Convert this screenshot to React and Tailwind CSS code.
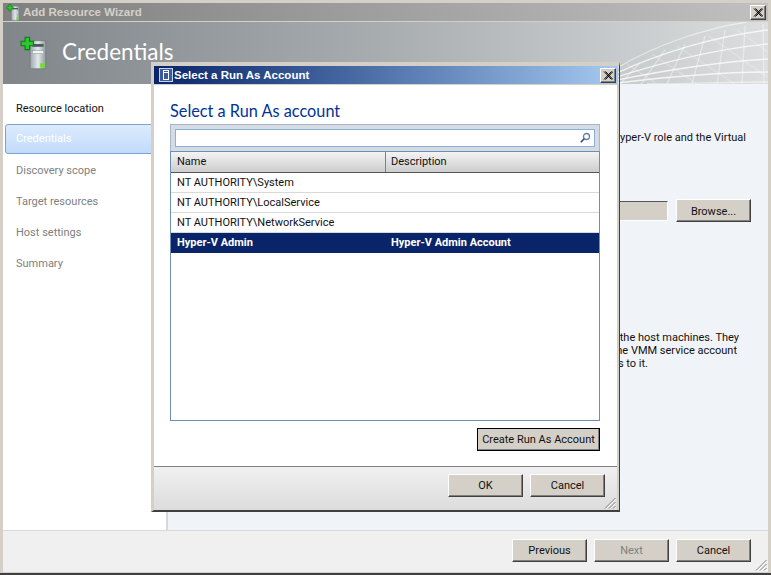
const ServerIcon = ({ className }) => (
    <svg viewBox="0 0 24 30" className={className}>
        <defs>
            <linearGradient id="srv" x1="0" x2="1" y1="0" y2="0">
                <stop offset="0" stopColor="#9aa6ac" />
                <stop offset="0.5" stopColor="#e4e9ea" />
                <stop offset="1" stopColor="#8c979d" />
            </linearGradient>
        </defs>
        <rect x="9" y="4" width="14" height="25" rx="1" fill="url(#srv)" stroke="#6b767c" strokeWidth="0.6" />
        <rect x="11" y="7" width="10" height="2.5" fill="#4f5a60" />
        <rect x="11" y="13" width="10" height="2.5" fill="#f4f6f6" stroke="#7d888e" strokeWidth="0.4" />
        <rect x="18" y="24" width="4" height="4" fill="#6fe02a" />
        <path d="M4.5 1h4v3.5H12v4H8.5V12h-4V8.500H1v-4h3.500z" fill="#27c92d" stroke="#0f7a18" strokeWidth="1" />
    </svg>
);

const CloseButton = ({ className }) => (
    <button className={`flex h-[15px] w-[16px] items-center justify-center border-t border-l border-t-white border-l-white border-r border-b border-r-[#404040] border-b-[#404040] bg-[#d4d0c8] shadow-[inset_-1px_-1px_0_#808080] ${className}`}>
        <svg viewBox="0 0 10 9" className="h-[9px] w-[10px]">
            <path d="M1 0.500L8.500 8.500M2.500 0.500L10 8.500M8.500 0.500L1 8.500M10 0.500L2.500 8.500" stroke="#000" strokeWidth="1" fill="none" />
        </svg>
    </button>
);

const Grip = ({ className }) => (
    <svg viewBox="0 0 12 12" className={`h-3 w-3 ${className}`}>
        <path d="M11.500 1L1 11.500M11.500 5L5 11.500M11.500 9L9 11.500" stroke="#808080" strokeWidth="1" fill="none" />
        <path d="M11.500 2.500L2.500 11.500M11.500 6.500L6.500 11.500M11.500 10.500L10.500 11.500" stroke="#fff" strokeWidth="1" fill="none" />
    </svg>
);

const Button = ({ children, disabled, className = '' }) => (
    <button className={`flex h-[23px] w-[75px] items-center justify-center whitespace-nowrap border-t border-l border-t-white border-l-white border-r border-b border-r-[#404040] border-b-[#404040] bg-[#d4d0c8] pt-[2px] shadow-[inset_-1px_-1px_0_#808080] text-[11px] ${disabled ? 'text-[#808080]' : 'text-[#111]'} ${className}`}>
        {children}
    </button>
);

const Mesh = () => (
    <svg viewBox="0 0 151 62" className="h-[62px] w-[151px] shrink-0" fill="none">
        <g stroke="#fff" strokeOpacity="0.75" strokeWidth="1.300">
            <path d="M0 46C40 22 90 6 130 0" strokeOpacity="0.5" />
            <path d="M0 51C45 30 100 14 151 8" />
            <path d="M0 55C50 39 100 27 151 22" />
            <path d="M0 58C50 48 100 40 151 37" />
            <path d="M0 61C50 55 100 50 151 50" />
            <path d="M30 62C60 62 110 60 151 60" strokeOpacity="0.5" />
        </g>
        <g stroke="#fff" strokeOpacity="0.4" strokeWidth="1.300">
            <path d="M3 62L22 42M24 62L48 28M50 62L68 22M75 62L88 14M100 62L108 8M125 62L128 4M147 62L146 2" />
            <path d="M10 42L40 62M35 32L80 62M60 24L118 62M92 14L150 55M120 8L151 30" strokeOpacity="0.25" />
        </g>
    </svg>
);

const StepItem = ({ label, active, disabled }) => {
    if (active) {
        return (
            <div className="-mr-1 mb-px flex h-[30px] items-center rounded-[3px] border border-[#7da2ce] bg-gradient-to-b from-[#dcebfc] to-[#c1dbfc] pl-[10px] text-white">
                {label}
            </div>
        );
    }
    return (
        <div className={`flex h-[31px] items-center pl-[11px] pt-px ${disabled ? 'text-[#808080]' : 'text-[#111]'}`}>
            {label}
        </div>
    );
};

const AccountRow = ({ name, description, selected }) => (
    <div className={`flex h-5 items-center pt-px ${selected ? 'bg-[#0a246a] font-bold text-white' : 'border-b border-[#d9d9d9] text-[#111]'}`}>
        <div className="w-[215px] pl-[6px]">{name}</div>
        <div className="pl-[5px]">{description}</div>
    </div>
);

const SelectDialog = () => (
    <div className="absolute left-[151px] top-[62px] flex h-[450px] w-[469px] flex-col border-r border-b-2 border-r-[#404040] border-b-[#404040] border-t-[4px] border-l-[3px] border-t-[#d4d0c8] border-l-[#d4d0c8]">
        <div className="mr-[1px] flex h-[18px] shrink-0 items-center bg-gradient-to-r from-[#0a246a] to-[#a6caf0] pl-[5px] pr-[2px]">
            <div className="flex h-[14px] w-[14px] items-center justify-center border border-[#c9d3ea] bg-[#3d5a9e]">
                <div className="flex h-[10px] w-[6px] flex-col gap-[1px] border border-white">
                    <div className="h-[2px] border-b border-white" />
                </div>
            </div>
            <span className="ml-[1px] mt-px font-['Liberation_Sans'] text-[11.500px] font-bold text-white">Select a Run As Account</span>
            <CloseButton className="ml-auto" />
        </div>
        <div className="flex flex-1 flex-col border-t border-t-[#d4d0c8] border-r-2 border-r-[#d4d0c8]">
            <div className="flex flex-1 flex-col bg-white pl-[16px] pr-[17px] pt-[14px]">
                <h1 className="h-[25px] font-['Lato'] text-[16.300px] leading-[24px] text-[#003399]">Select a Run As account</h1>
                <div className="flex h-[27px] items-center border border-b-0 border-[#a8b8cc] bg-[#d5dbe2] px-[4px]">
                    <div className="flex h-[18px] flex-1 items-center justify-end border border-[#8eb0d4] bg-white pr-[3px]">
                        <svg viewBox="0 0 12 12" className="h-3 w-3" fill="none">
                            <circle cx="7.500" cy="4.500" r="3" stroke="#5f7fa8" strokeWidth="1.300" />
                            <path d="M5.200 6.800L1.800 10.200" stroke="#2f4a70" strokeWidth="1.600" />
                        </svg>
                    </div>
                </div>
                <div className="flex h-[270px] flex-col border border-[#6d8fb5]">
                    <div className="flex h-[21px] shrink-0 border-b border-[#555] bg-gradient-to-b from-[#f4f4f4] to-[#cdcdcd] text-[#111]">
                        <div className="flex w-[215px] items-center border-r border-[#808080] pl-[6px]">Name</div>
                        <div className="flex items-center pl-[5px]">Description</div>
                    </div>
                    <AccountRow name="NT AUTHORITY\System" />
                    <AccountRow name="NT AUTHORITY\LocalService" />
                    <AccountRow name="NT AUTHORITY\NetworkService" />
                    <AccountRow name="Hyper-V Admin" description="Hyper-V Admin Account" selected />
                </div>
                <div className="mt-[7px] flex justify-end">
                    <Button className="w-[123px] outline outline-1 -outline-offset-1 outline-black">Create Run As Account</Button>
                </div>
            </div>
            <div className="relative flex h-[44px] shrink-0 items-start justify-end gap-[7px] border-t border-[#808080] bg-gradient-to-b from-[#f0f0f0] to-[#dcdcdc] pr-[12px] pt-[7px]">
                <Button>OK</Button>
                <Button>Cancel</Button>
                <Grip className="absolute bottom-[1px] right-[1px]" />
            </div>
        </div>
    </div>
);

export default function App() {
    return (
        <div className="relative h-[575px] w-[771px] overflow-hidden bg-[#d4d0c8] font-['Roboto',sans-serif] text-[11px]">
            <div className="flex h-[573px] flex-col border-t-[3px] border-l-[3px] border-r-[3px] border-b-[1px] border-t-[#d4d0c8] border-l-[#d4d0c8] border-r-[#d4d0c8] border-b-[#d4d0c8]">
                <div className="flex h-[18px] shrink-0 items-center bg-gradient-to-r from-[#808080] to-[#c0c0c0] pl-[3px] pr-[2px]">
                    <ServerIcon className="h-[17px] w-[14px]" />
                    <span className="ml-[3px] mt-px font-['Liberation_Sans'] text-[11.500px] font-bold text-[#d4d0c8]">Add Resource Wizard</span>
                    <CloseButton className="ml-auto" />
                </div>
                <div className="flex h-[63px] shrink-0 items-center justify-between border-t border-[#d4d0c8] bg-gradient-to-r from-[#80868a] via-[#a8adb0] to-[#dcdedf]">
                    <div className="flex items-center pl-[17px]">
                        <ServerIcon className="h-[34px] w-[27px]" />
                        <span className="mb-[3px] ml-[15px] font-['Lato'] text-[22.500px] text-white">Credentials</span>
                    </div>
                    <Mesh />
                </div>
                <div className="flex min-h-0 flex-1">
                    <div className="w-[165px] shrink-0 border-r-2 border-[#d9d9d9] bg-white pl-[2px] pt-[9px]">
                        <StepItem label="Resource location" />
                        <StepItem label="Credentials" active />
                        <StepItem label="Discovery scope" disabled />
                        <StepItem label="Target resources" disabled />
                        <StepItem label="Host settings" disabled />
                        <StepItem label="Summary" disabled />
                    </div>
                    <div className="flex min-w-0 flex-1 flex-col overflow-hidden bg-[#f0f4f8] leading-[13px] text-[#111]">
                        <div className="mt-[46px] whitespace-nowrap pr-[22px] text-right leading-[15px]">Hyper-V role and the Virtual</div>
                        <div className="mt-[54px] flex items-center justify-end gap-[8px] pr-[17px]">
                            <div className="h-[20px] w-[200px] border-t border-l border-t-[#555] border-l-[#555] border-r border-b border-r-white border-b-white bg-[#d4d0c8]" />
                            <Button>Browse...</Button>
                        </div>
                        <div className="mt-[109px] whitespace-nowrap pr-[29px] text-right">the host machines. They</div>
                        <div className="whitespace-nowrap pr-[31px] text-right">the VMM service account</div>
                        <div className="whitespace-nowrap pr-[120px] text-right">rights to it.</div>
                    </div>
                </div>
                <div className="relative flex h-[42px] shrink-0 items-start justify-end gap-[7px] border-t border-[#d9d9d9] bg-[#f0f0f0] pr-[17px] pt-[8px]">
                    <Button>Previous</Button>
                    <Button disabled>Next</Button>
                    <Button>Cancel</Button>
                    <Grip className="absolute bottom-[1px] right-[1px]" />
                </div>
            </div>
            <div className="h-[2px] bg-[#404040]" />
            <SelectDialog />
        </div>
    );
}
